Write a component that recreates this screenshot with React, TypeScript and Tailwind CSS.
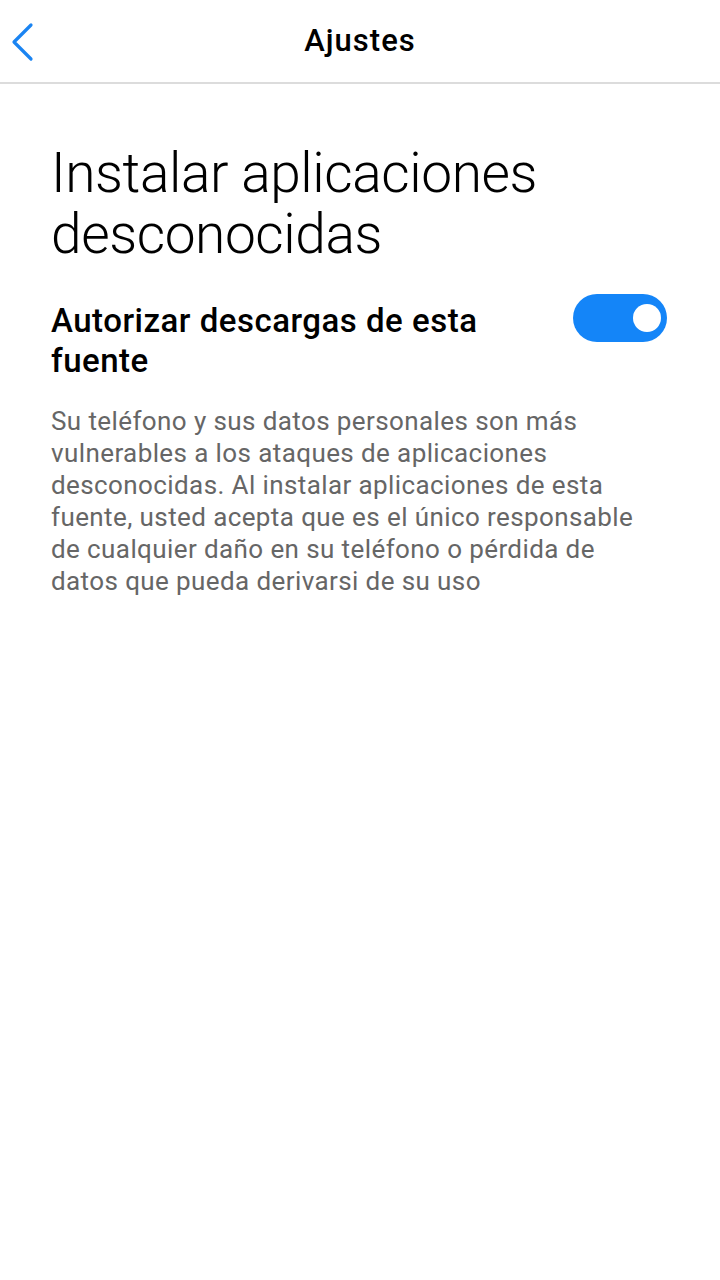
import { FC } from "react";

const BackIcon: FC = () => (
    <svg width="24" height="40" viewBox="0 0 24 40" fill="none">
        <path d="M20 3 L3 20 L20 37" stroke="#1a84f2" strokeWidth="3.2" strokeLinecap="round" strokeLinejoin="round" />
    </svg>
);

const Toggle: FC = () => (
    <div className="w-[94px] h-[48px] rounded-full bg-[#1485f8] flex items-center justify-end pr-[6px] shrink-0">
        <div className="w-[28px] h-[28px] rounded-full bg-white" />
    </div>
);

const App: FC = () => (
    <div className="w-[720px] h-[1280px] bg-white font-['Roboto',sans-serif]">
        <div className="h-[84px] border-b-[2px] border-[#dcdcdc] relative flex items-center justify-center">
            <div className="absolute left-[11px] top-[22px]">
                <BackIcon />
            </div>
            <p className="text-[31px] font-medium text-black tracking-[1px]">Ajustes</p>
        </div>
        <div className="px-[51px] pt-[59px]">
            <h1 className="text-[55px] font-light leading-[61px] text-black tracking-[-0.4px]">
                Instalar aplicaciones desconocidas
            </h1>
            <div className="flex items-start justify-between mt-[36px]">
                <p className="text-[33px] font-medium leading-[40px] text-black tracking-[0.5px] w-[460px]">
                    Autorizar descargas de esta fuente
                </p>
                <div className="mr-[2px] -mt-[7px]">
                    <Toggle />
                </div>
            </div>
            <p className="mt-[24px] w-[600px] text-[26px] leading-[32px] text-[#666666] tracking-[0.4px]">
                Su teléfono y sus datos personales son más vulnerables a los ataques de aplicaciones desconocidas. Al instalar aplicaciones de esta fuente, usted acepta que es el único responsable de cualquier daño en su teléfono o pérdida de datos que pueda derivarsi de su uso
            </p>
        </div>
    </div>
);

export default App;
